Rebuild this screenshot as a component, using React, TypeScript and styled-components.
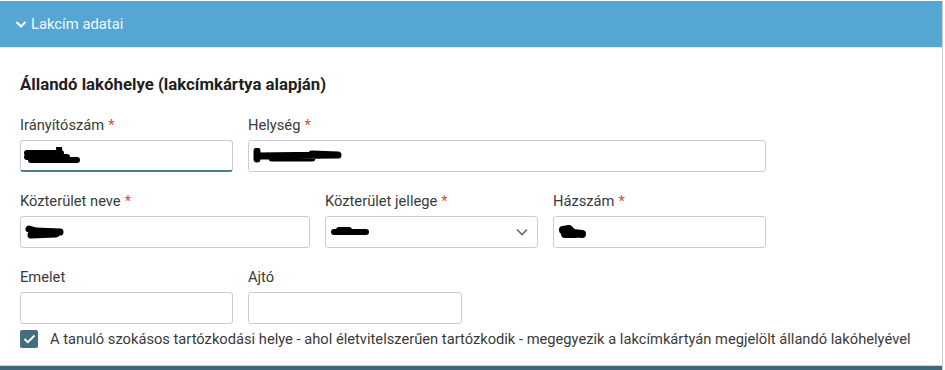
import React from "react";
import styled, { createGlobalStyle } from "styled-components";

const Global = createGlobalStyle`
  html, body { margin: 0; padding: 0; background: #fff; }
  body { font-family: Roboto, "Noto Sans", "Liberation Sans", sans-serif; overflow: hidden; }
  * { box-sizing: border-box; }
`;

const Page = styled.div`
  width: 945px;
  height: 370px;
  padding-top: 1px;
  display: flex;
  flex-direction: column;
`;

const Panel = styled.section`
  width: 943px;
  flex: 1;
  border-right: 1px solid #cfcfcf;
  display: flex;
  flex-direction: column;
`;

const Header = styled.div`
  height: 46px;
  background: #55a6d3;
  border-bottom: 1px solid #d6ebf6;
  display: flex;
  align-items: center;
  padding-left: 15px;
  gap: 4px;
  color: #f4f8fb;
  font-size: 14.8px;
  box-sizing: content-box;
`;

const Body = styled.div`
  flex: 1;
  padding: 26px 0 0 20px;
  display: flex;
  flex-direction: column;
`;

const Title = styled.h3`
  margin: 0 0 20px;
  font-size: 16.8px;
  line-height: 21px;
  font-weight: 700;
  color: #1e1e1e;
`;

const Row = styled.div`
  display: flex;
  gap: 15px;
  margin-bottom: 19px;
`;

const Field = styled.div<{ $w: number }>`
  width: ${(p) => p.$w}px;
  display: flex;
  flex-direction: column;
  gap: 5px;
`;

const Label = styled.label`
  font-size: 14.7px;
  line-height: 20px;
  color: #3a3a3a;
`;

const Req = styled.span`
  color: #e2483d;
  margin-left: 4px;
`;

const Input = styled.div<{ $focus?: boolean; $pad?: number }>`
  position: relative;
  height: 32px;
  border: 1px solid #cdcdcd;
  border-radius: 3px;
  background: #fff;
  ${(p) => (p.$focus ? "border-bottom: 2px solid #4d7c92;" : "")}
  display: flex;
  align-items: center;
  padding: 0 8px 0 ${(p) => p.$pad ?? 8}px;
`;

const Chevron = styled.svg`
  position: absolute;
  right: 9px;
  top: 11px;
`;

const Scribble = styled.svg`
  display: block;
`;

const CheckRow = styled.label`
  display: flex;
  align-items: center;
  gap: 12px;
  margin-top: -14px;
  font-size: 14.7px;
  line-height: 20px;
  color: #3a3a3a;
`;

const Box = styled.span`
  width: 18px;
  height: 18px;
  border-radius: 2px;
  background: #466d7e;
  display: flex;
  align-items: center;
  justify-content: center;
`;

const Footer = styled.div`
  height: 5px;
  border-top: 1px solid #d5d5d5;
  background: #3d6a7c;
  margin-top: auto;
`;

type Blot = { w: number; h: number; d: string; sw: number };

const Redact = ({ b }: { b: Blot }) => (
  <Scribble width={b.w} height={b.h} viewBox={`0 0 ${b.w} ${b.h}`}>
    <path d={b.d} stroke="#000" strokeWidth={b.sw} strokeLinecap="round" strokeLinejoin="round" fill="none" />
  </Scribble>
);

const blots: Record<string, Blot> = {
  irsz: { w: 62, h: 18, d: "M6 6 L40 6 M6 10 L46 10 M10 13 L56 13 M38 1 L39 8", sw: 6 },
  hely: { w: 92, h: 16, d: "M5 8 L84 7 M5 3 L5 11 M60 6 L86 7 M20 10 L60 10", sw: 7 },
  kozt: { w: 42, h: 16, d: "M5 5 L12 7 L36 8 M7 11 L32 10", sw: 7 },
  jell: { w: 42, h: 12, d: "M5 6 L37 6 M10 4 L20 4", sw: 6 },
  hsz: { w: 32, h: 16, d: "M6 6 L12 5 L16 9 L25 10 M8 10 L18 10", sw: 8 },
};

export default function App() {
  return (
    <>
      <Global />
      <Page>
        <Panel>
          <Header>
            <svg width="12" height="9" viewBox="0 0 12 9">
              <path d="M1.5 2 L6 6.5 L10.5 2" stroke="#f4f8fb" strokeWidth="2.2" fill="none" />
            </svg>
            <span>Lakcím adatai</span>
          </Header>
          <Body>
            <Title>Állandó lakóhelye (lakcímkártya alapján)</Title>
            <Row>
              <Field $w={213}>
                <Label>Irányítószám<Req>*</Req></Label>
                <Input $focus $pad={0}>
                  <Redact b={blots.irsz} />
                </Input>
              </Field>
              <Field $w={518}>
                <Label>Helység<Req>*</Req></Label>
                <Input $pad={3}>
                  <Redact b={blots.hely} />
                </Input>
              </Field>
            </Row>
            <Row>
              <Field $w={290}>
                <Label>Közterület neve<Req>*</Req></Label>
                <Input $pad={3}>
                  <Redact b={blots.kozt} />
                </Input>
              </Field>
              <Field $w={213}>
                <Label>Közterület jellege<Req>*</Req></Label>
                <Input $pad={3}>
                  <Redact b={blots.jell} />
                  <Chevron width="12" height="8" viewBox="0 0 12 8">
                    <path d="M1 1.5 L6 6.5 L11 1.5" stroke="#6b6b6b" strokeWidth="1.6" fill="none" />
                  </Chevron>
                </Input>
              </Field>
              <Field $w={213}>
                <Label>Házszám<Req>*</Req></Label>
                <Input $pad={3}>
                  <Redact b={blots.hsz} />
                </Input>
              </Field>
            </Row>
            <Row>
              <Field $w={213}>
                <Label>Emelet</Label>
                <Input />
              </Field>
              <Field $w={214}>
                <Label>Ajtó</Label>
                <Input />
              </Field>
            </Row>
            <CheckRow>
              <Box>
                <svg width="13" height="10" viewBox="0 0 13 10">
                  <path d="M1.5 5 L4.8 8.2 L11.5 1.5" stroke="#fff" strokeWidth="1.8" fill="none" />
                </svg>
              </Box>
              <span>
                A tanuló szokásos tartózkodási helye - ahol életvitelszerűen tartózkodik - megegyezik a lakcímkártyán megjelölt állandó lakóhelyével
              </span>
            </CheckRow>
          </Body>
          <Footer />
        </Panel>
      </Page>
    </>
  );
}
